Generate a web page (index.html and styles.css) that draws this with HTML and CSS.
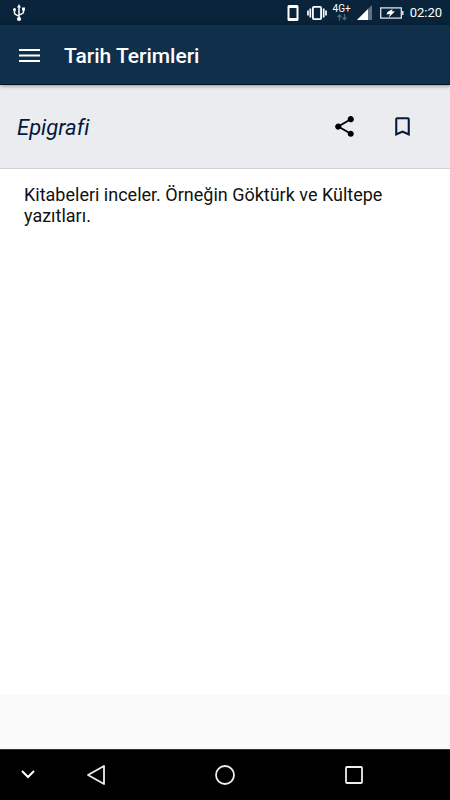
FILE: index.html
```html
<!DOCTYPE html>
<html lang="tr">
<head>
<meta charset="utf-8">
<meta name="viewport" content="width=device-width, initial-scale=1">
<title>Tarih Terimleri</title>
<link rel="stylesheet" href="styles.css">
</head>
<body>
<div class="screen">
  <div class="status">
    <svg class="usb" width="14" height="18" viewBox="0 0 14 18" fill="none" stroke="#fff" stroke-width="1.5">
      <path d="M7 3v12M2.500 6v3q0 1.500 4.500 3M11.500 5v3q0 1.500-4.500 3"/>
      <path d="M7 0l2 3.500H5z" fill="#fff" stroke="none"/>
      <circle cx="7" cy="15" r="2.100" fill="#fff" stroke="none"/>
      <circle cx="2.500" cy="5.500" r="1.500" fill="#fff" stroke="none"/>
      <path d="M10 3.500h3v3h-3z" fill="#fff" stroke="none"/>
    </svg>
    <div class="indicators">
      <svg width="14" height="18" viewBox="0 0 14 18"><path fill="#fff" fill-rule="evenodd" d="M2 1h8q1.500 0 1.500 1.500v13q0 1.500-1.500 1.500H2q-1.500 0-1.500-1.500v-13Q.5 1 2 1zM2.500 4v10h7V4z"/></svg>
      <svg width="20" height="16" viewBox="0 0 20 16" fill="none" stroke="#fff"><rect x="5.900" y="1.900" width="8.200" height="12.200" rx="1" stroke-width="1.800"/><path stroke-width="1.700" d="M3.300 3.500v9M16.700 3.500v9M1 5.500v5M19 5.500v5"/></svg>
      <div class="network">
        <span>4G+</span>
        <svg width="10" height="7" viewBox="0 0 10 7" fill="none" stroke="#52687c" stroke-width="1.300"><path d="M2.500 6.500V1M.5 3l2-2 2 2M7.500 0v5.500M5.500 3.500l2 2 2-2"/></svg>
      </div>
      <svg width="15" height="15" viewBox="0 0 15 15"><path fill="#60717f" d="M15 0v15H0z"/><path fill="#fff" d="M11 4v11H0z"/></svg>
      <svg class="battery" width="24" height="12" viewBox="0 0 24 12"><rect x=".7" y=".9" width="20.600" height="10.200" fill="none" stroke="#dce3e8" stroke-width="1.300"/><path fill="#dce3e8" d="M22 4h1.500v4H22z"/><path fill="#fff" d="M7.500 5l5-3-.5 2.300 3 .2-6.500 6 1.500-3.500-3.500.5z"/></svg>
      <time class="clock">02:20</time>
    </div>
  </div>
  <header class="toolbar">
    <button class="icon-button" aria-label="Menü">
      <svg width="21" height="16" viewBox="0 0 21 16" fill="none" stroke="#fff" stroke-width="2"><path d="M0 2h21M0 7.500h21M0 13h21"/></svg>
    </button>
    <h1 class="title">Tarih Terimleri</h1>
  </header>
  <div class="term-bar">
    <h2 class="term">Epigrafi</h2>
    <button class="icon-button" aria-label="Paylaş">
      <svg width="25" height="25" viewBox="0 0 24 24"><path d="M18 16.080c-.76 0-1.440.3-1.960.77L8.910 12.700c.05-.23.090-.46.090-.7s-.040-.47-.090-.7l7.050-4.110c.54.5 1.250.81 2.040.81 1.660 0 3-1.340 3-3s-1.340-3-3-3-3 1.340-3 3c0 .24.040.47.090.7L8.040 9.810C7.500 9.310 6.790 9 6 9c-1.660 0-3 1.340-3 3s1.340 3 3 3c.79 0 1.500-.31 2.040-.81l7.120 4.160c-.05.21-.08.43-.08.65 0 1.610 1.310 2.920 2.920 2.920s2.920-1.310 2.920-2.920-1.310-2.920-2.920-2.920z"/></svg>
    </button>
    <button class="icon-button" aria-label="Yer işareti ekle">
      <svg width="25" height="25" viewBox="0 0 24 24" fill="#05193b"><path d="M17 3H7c-1.100 0-2 .9-2 2v16l7-3 7 3V5c0-1.100-.9-2-2-2zm0 15l-5-2.180L7 18V5h10v13z"/></svg>
    </button>
  </div>
  <main class="content">
    <p class="definition">Kitabeleri inceler. Örneğin Göktürk ve Kültepe yazıtları.</p>
  </main>
  <div class="banner"></div>
  <nav class="system-nav">
    <button class="nav-button" aria-label="Gizle"><svg width="14" height="10" viewBox="0 0 14 10" fill="none" stroke="#fff" stroke-width="2"><path d="M1 1l6 6 6-6"/></svg></button>
    <button class="nav-button" aria-label="Geri"><svg width="20" height="22" viewBox="0 0 20 22" fill="none" stroke="#eee" stroke-width="1.800" stroke-linejoin="round"><path d="M18 2v18L2 11z"/></svg></button>
    <button class="nav-button" aria-label="Ana ekran"><svg width="22" height="22" viewBox="0 0 22 22" fill="none" stroke="#eee" stroke-width="1.800"><circle cx="11" cy="11" r="9"/></svg></button>
    <button class="nav-button" aria-label="Son uygulamalar"><svg width="18" height="18" viewBox="0 0 18 18" fill="none" stroke="#eee" stroke-width="1.800"><rect x="1" y="1" width="16" height="16" rx="1"/></svg></button>
  </nav>
</div>
</body>
</html>
```
FILE: styles.css
```css
* {
  box-sizing: border-box;
}

body {
  margin: 0;
  font-family: Roboto, "Liberation Sans", sans-serif;
}

h1, h2, p {
  margin: 0;
}

svg {
  display: block;
  flex: none;
}

button {
  padding: 0;
  border: 0;
  background: none;
}

.screen {
  display: flex;
  flex-direction: column;
  min-height: 100vh;
  background: #fff;
}

.status {
  display: flex;
  justify-content: space-between;
  align-items: center;
  height: 25px;
  padding: 0 8px 0 12px;
  background: #08233a;
  color: #fff;
}

.indicators {
  display: flex;
  align-items: center;
  gap: 6px;
}

.network {
  display: flex;
  flex-direction: column;
  align-items: center;
  font-size: 10px;
  line-height: 10px;
}

.battery {
  margin-left: 2px;
}

.clock {
  font-size: 13px;
  line-height: 16px;
}

.toolbar {
  position: relative;
  display: flex;
  align-items: center;
  gap: 12px;
  height: 60px;
  padding: 2px 8px 0;
  background: #102f4a;
  border-bottom: 1px solid #030d1c;
  box-shadow: 0 1px 4px rgba(0, 0, 0, 0.4);
}

.icon-button {
  display: grid;
  place-items: center;
  width: 44px;
  height: 44px;
}

.toolbar .icon-button {
  width: 43px;
}

.title {
  margin-left: 1px;
  font-size: 21px;
  line-height: 24px;
  font-weight: 500;
  color: #fff;
}

.term-bar {
  display: flex;
  align-items: center;
  gap: 14px;
  height: 84px;
  padding: 0 26px 0 17px;
  background: #ebecf0;
  border-bottom: 1px solid #d0d1d3;
}

.term {
  flex: 1;
  padding-top: 2px;
  font-size: 22px;
  line-height: 26px;
  font-weight: 400;
  font-style: italic;
  color: #05193b;
}

.content {
  flex: 1;
  padding: 15px 24px;
}

.definition {
  font-size: 18px;
  line-height: 21px;
  color: #111;
}

.banner {
  height: 54px;
  background: #fafafa;
}

.system-nav {
  display: grid;
  grid-template-columns: 55px 82px 1fr 82px 55px;
  height: 51px;
  background: #000;
  border-top: 1px solid #333;
}

.nav-button {
  display: grid;
  place-items: center;
}
```
